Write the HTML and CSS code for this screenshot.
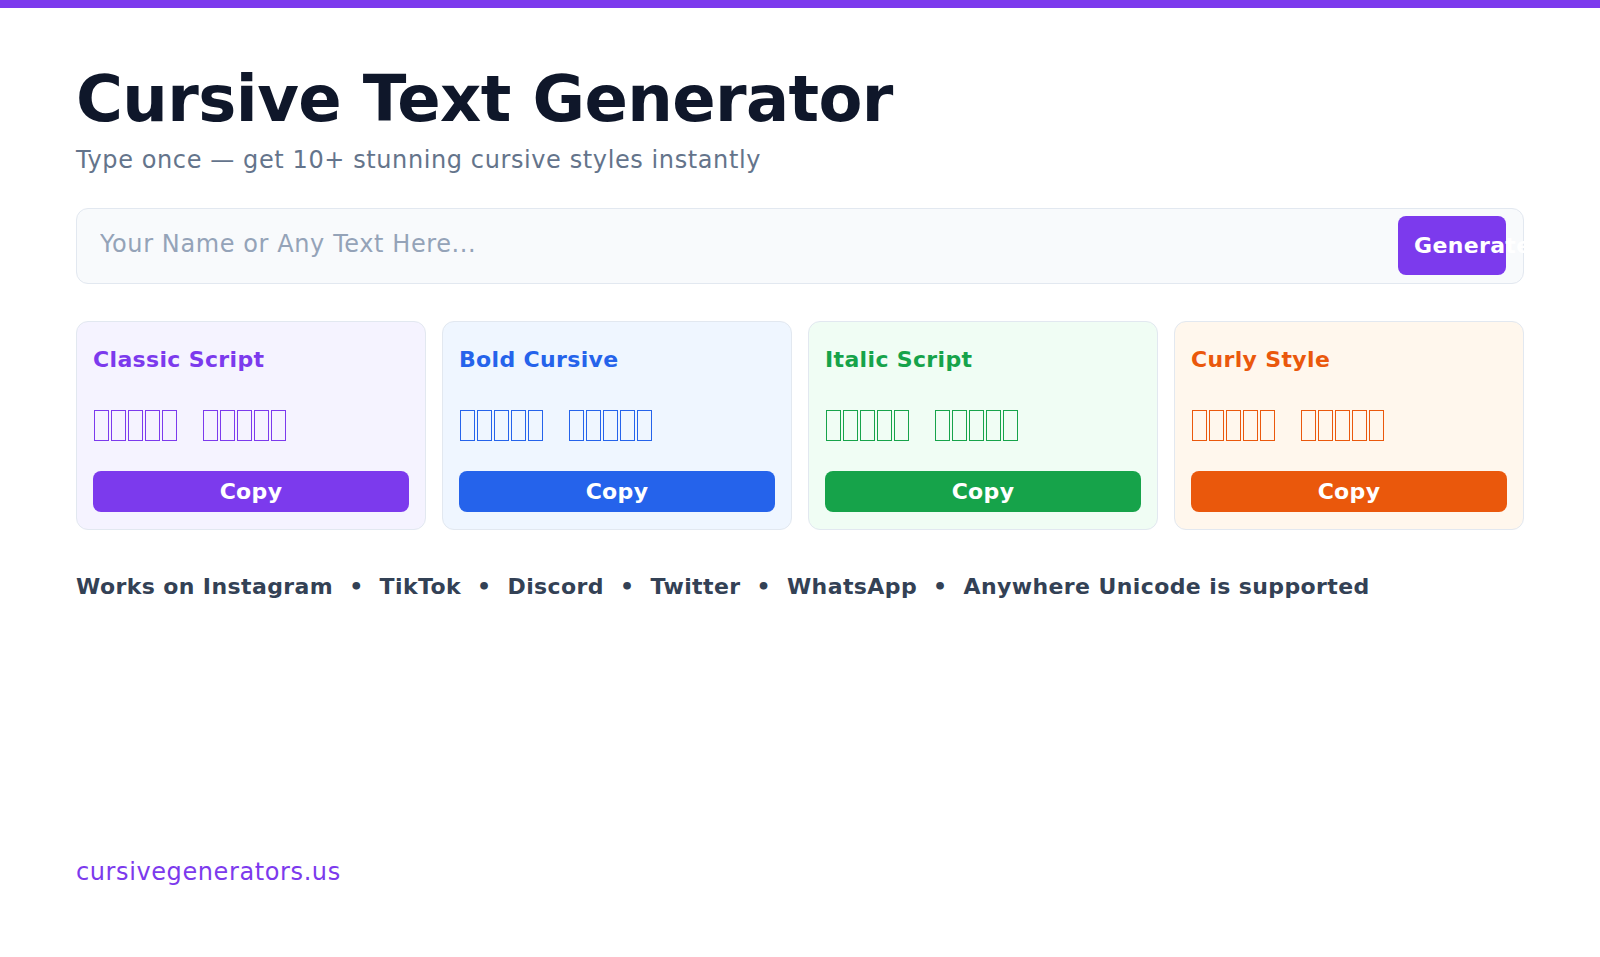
FILE: index.html
```html
<!DOCTYPE html>
<html lang="en">

<head>
    <meta charset="UTF-8">
    <meta name="viewport" content="width=device-width, initial-scale=1.0">
    <title>Cursive Text Generator</title>
    <link rel="stylesheet" href="styles.css">
</head>

<body>
    <div class="top_bar"></div>
    <div class="page">
        <h1 class="title">Cursive Text Generator</h1>
        <p class="subtitle">Type once — get 10+ stunning cursive styles instantly</p>

        <form class="search">
            <input type="text" class="search_input" placeholder="Your Name or Any Text Here...">
            <button type="button" class="search_btn">Generate</button>
        </form>

        <!-- sample glyphs show up as missing-glyph boxes -->
        <div class="cards">
            <div class="card purple">
                <div class="card_title">Classic Script</div>
                <div class="card_sample" aria-label="𝒽𝑒𝓁𝓁𝑜 𝓌𝑜𝓇𝓁𝒹">
                    <span class="word"><i></i><i></i><i></i><i></i><i></i></span>
                    <span class="word"><i></i><i></i><i></i><i></i><i></i></span>
                </div>
                <button class="copy_btn">Copy</button>
            </div>
            <div class="card blue">
                <div class="card_title">Bold Cursive</div>
                <div class="card_sample" aria-label="𝓱𝓮𝓵𝓵𝓸 𝔀𝓸𝓻𝓵𝓭">
                    <span class="word"><i></i><i></i><i></i><i></i><i></i></span>
                    <span class="word"><i></i><i></i><i></i><i></i><i></i></span>
                </div>
                <button class="copy_btn">Copy</button>
            </div>
            <div class="card green">
                <div class="card_title">Italic Script</div>
                <div class="card_sample" aria-label="𝘩𝘦𝘭𝘭𝘰 𝘸𝘰𝘳𝘭𝘥">
                    <span class="word"><i></i><i></i><i></i><i></i><i></i></span>
                    <span class="word"><i></i><i></i><i></i><i></i><i></i></span>
                </div>
                <button class="copy_btn">Copy</button>
            </div>
            <div class="card orange">
                <div class="card_title">Curly Style</div>
                <div class="card_sample" aria-label="𝒉𝒆𝒍𝒍𝒐 𝒘𝒐𝒓𝒍𝒅">
                    <span class="word"><i></i><i></i><i></i><i></i><i></i></span>
                    <span class="word"><i></i><i></i><i></i><i></i><i></i></span>
                </div>
                <button class="copy_btn">Copy</button>
            </div>
        </div>

        <p class="works">Works on Instagram<span class="sep">•</span>TikTok<span class="sep">•</span>Discord<span class="sep">•</span>Twitter<span class="sep">•</span>WhatsApp<span class="sep">•</span>Anywhere Unicode is supported</p>

        <div class="footer">cursivegenerators.us</div>
    </div>
</body>

</html>
```

FILE: styles.css
```css
* {
    margin: 0;
    padding: 0;
    box-sizing: border-box;
}

body {
    font-family: "DejaVu Sans", sans-serif;
    background: white;
}

.top_bar {
    height: 8px;
    background: rgb(124, 58, 237);
}

.page {
    min-height: calc(100vh - 8px);
    display: flex;
    flex-flow: column;
    padding: 53px 76px 67px;
}

.title {
    font-size: 64px;
    line-height: 1.2;
    letter-spacing: -0.6px;
    font-weight: bold;
    color: rgb(15, 23, 42);
}

.subtitle {
    margin-top: 6px;
    font-size: 24px;
    line-height: 1.4;
    letter-spacing: 0.6px;
    color: rgb(100, 116, 139);
}

.search {
    margin-top: 31px;
    display: flex;
    align-items: center;
    height: 76px;
    padding: 7px 17px 8px 0;
    background: rgb(248, 250, 252);
    border: 1px solid rgb(226, 232, 240);
    border-radius: 12px;
}

.search_input {
    flex: 1;
    min-width: 0;
    height: 100%;
    padding-left: 23px;
    padding-bottom: 3px;
    border: none;
    outline: none;
    background: transparent;
    font-family: "DejaVu Sans", sans-serif;
    font-size: 24px;
    letter-spacing: 0.6px;
    color: rgb(15, 23, 42);
}

.search_input::placeholder {
    color: rgb(148, 163, 184);
}

.search_btn {
    width: 108px;
    height: 59px;
    flex-shrink: 0;
    padding-left: 16px;
    text-align: left;
    white-space: nowrap;
    overflow: visible;
    border: none;
    border-radius: 8px;
    background: rgb(124, 58, 237);
    color: white;
    font-family: "DejaVu Sans", sans-serif;
    font-size: 22px;
    letter-spacing: 0.35px;
    font-weight: bold;
    cursor: pointer;
}

.cards {
    margin-top: 37px;
    display: grid;
    grid-template-columns: repeat(4, 1fr);
    gap: 16px;
}

.card {
    display: flex;
    flex-flow: column;
    padding: 21px 16px 17px;
    border: 1px solid rgb(226, 232, 240);
    border-radius: 12px;
}

.card_title {
    font-size: 22px;
    line-height: 1.5;
    letter-spacing: 0.35px;
    font-weight: bold;
}

.card_sample {
    display: flex;
    gap: 26.5px;
    margin: 34px 0 30px 1px;
}

.word {
    display: flex;
    gap: 2.5px;
}

.word i {
    width: 14.5px;
    height: 31px;
    border: 1.2px solid currentColor;
}

.copy_btn {
    height: 41px;
    border: none;
    border-radius: 8px;
    color: white;
    font-family: "DejaVu Sans", sans-serif;
    font-size: 22px;
    letter-spacing: 0.35px;
    font-weight: bold;
    cursor: pointer;
}

.purple {
    background: rgb(245, 243, 255);
    color: rgb(124, 58, 237);
}

.purple .copy_btn {
    background: rgb(124, 58, 237);
}

.blue {
    background: rgb(239, 246, 255);
    color: rgb(37, 99, 235);
}

.blue .copy_btn {
    background: rgb(37, 99, 235);
}

.green {
    background: rgb(240, 253, 244);
    color: rgb(22, 163, 74);
}

.green .copy_btn {
    background: rgb(22, 163, 74);
}

.orange {
    background: rgb(255, 247, 237);
    color: rgb(234, 88, 12);
}

.orange .copy_btn {
    background: rgb(234, 88, 12);
}

.works {
    margin-top: 40px;
    font-size: 22px;
    line-height: 1.5;
    letter-spacing: 0.4px;
    font-weight: bold;
    color: rgb(51, 65, 85);
}

.works .sep {
    margin: 0 16px;
}

.footer {
    margin-top: auto;
    font-size: 24px;
    line-height: 1.5;
    letter-spacing: 0.6px;
    color: rgb(124, 58, 237);
}
```
